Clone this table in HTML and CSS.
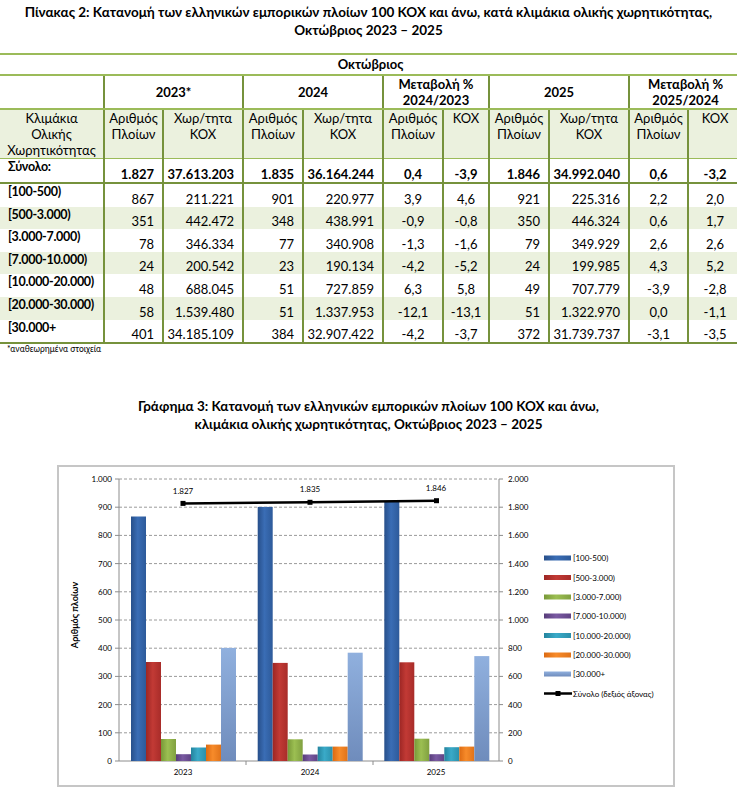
FILE: index.html
```
<!DOCTYPE html>
<html lang="el">
<head>
<meta charset="utf-8">
<title>Πίνακας 2</title>
<link rel="stylesheet" href="styles.css">
</head>
<body>
<h1 class="title">Πίνακας 2: Κατανομή των ελληνικών εμπορικών πλοίων 100 ΚΟΧ και άνω, κατά κλιμάκια ολικής χωρητικότητας,<br>Οκτώβριος 2023 – 2025</h1>

<table class="stats">
  <colgroup>
    <col class="c-lbl"><col class="c-n"><col class="c-w"><col class="c-n2"><col class="c-w"><col class="c-n2"><col class="c-k"><col class="c-n2"><col class="c-w"><col class="c-n"><col class="c-k2">
  </colgroup>
  <tr class="month"><th colspan="11">Οκτώβριος</th></tr>
  <tr class="years">
    <th class="first"></th>
    <th colspan="2">2023*</th>
    <th colspan="2">2024</th>
    <th colspan="2">Μεταβολή %<br>2024/2023</th>
    <th colspan="2">2025</th>
    <th colspan="2">Μεταβολή %<br>2025/2024</th>
  </tr>
  <tr class="sub">
    <th class="first">Κλιμάκια<br>Ολικής<br>Χωρητικότητας</th>
    <th>Αριθμός<br>Πλοίων</th><th>Χωρ/τητα<br>ΚΟΧ</th>
    <th>Αριθμός<br>Πλοίων</th><th>Χωρ/τητα<br>ΚΟΧ</th>
    <th>Αριθμός<br>Πλοίων</th><th>ΚΟΧ</th>
    <th>Αριθμός<br>Πλοίων</th><th>Χωρ/τητα<br>ΚΟΧ</th>
    <th>Αριθμός<br>Πλοίων</th><th>ΚΟΧ</th>
  </tr>
  <tr class="total">
    <td class="lbl">Σύνολο:</td>
    <td class="num">1.827</td><td class="num">37.613.203</td>
    <td class="num">1.835</td><td class="num">36.164.244</td>
    <td class="chg">0,4</td><td class="chg">-3,9</td>
    <td class="num">1.846</td><td class="num">34.992.040</td>
    <td class="chg">0,6</td><td class="chg">-3,2</td>
  </tr>
  <tr class="row">
    <td class="lbl">[100-500)</td>
    <td class="num">867</td><td class="num">211.221</td>
    <td class="num">901</td><td class="num">220.977</td>
    <td class="chg">3,9</td><td class="chg">4,6</td>
    <td class="num">921</td><td class="num">225.316</td>
    <td class="chg">2,2</td><td class="chg">2,0</td>
  </tr>
  <tr class="row alt">
    <td class="lbl">[500-3.000)</td>
    <td class="num">351</td><td class="num">442.472</td>
    <td class="num">348</td><td class="num">438.991</td>
    <td class="chg">-0,9</td><td class="chg">-0,8</td>
    <td class="num">350</td><td class="num">446.324</td>
    <td class="chg">0,6</td><td class="chg">1,7</td>
  </tr>
  <tr class="row">
    <td class="lbl">[3.000-7.000)</td>
    <td class="num">78</td><td class="num">346.334</td>
    <td class="num">77</td><td class="num">340.908</td>
    <td class="chg">-1,3</td><td class="chg">-1,6</td>
    <td class="num">79</td><td class="num">349.929</td>
    <td class="chg">2,6</td><td class="chg">2,6</td>
  </tr>
  <tr class="row alt">
    <td class="lbl">[7.000-10.000)</td>
    <td class="num">24</td><td class="num">200.542</td>
    <td class="num">23</td><td class="num">190.134</td>
    <td class="chg">-4,2</td><td class="chg">-5,2</td>
    <td class="num">24</td><td class="num">199.985</td>
    <td class="chg">4,3</td><td class="chg">5,2</td>
  </tr>
  <tr class="row">
    <td class="lbl">[10.000-20.000)</td>
    <td class="num">48</td><td class="num">688.045</td>
    <td class="num">51</td><td class="num">727.859</td>
    <td class="chg">6,3</td><td class="chg">5,8</td>
    <td class="num">49</td><td class="num">707.779</td>
    <td class="chg">-3,9</td><td class="chg">-2,8</td>
  </tr>
  <tr class="row alt">
    <td class="lbl">[20.000-30.000)</td>
    <td class="num">58</td><td class="num">1.539.480</td>
    <td class="num">51</td><td class="num">1.337.953</td>
    <td class="chg">-12,1</td><td class="chg">-13,1</td>
    <td class="num">51</td><td class="num">1.322.970</td>
    <td class="chg">0,0</td><td class="chg">-1,1</td>
  </tr>
  <tr class="row last">
    <td class="lbl">[30.000+</td>
    <td class="num">401</td><td class="num">34.185.109</td>
    <td class="num">384</td><td class="num">32.907.422</td>
    <td class="chg">-4,2</td><td class="chg">-3,7</td>
    <td class="num">372</td><td class="num">31.739.737</td>
    <td class="chg">-3,1</td><td class="chg">-3,5</td>
  </tr>
</table>
<p class="note">*αναθεωρημένα στοιχεία</p>

<h2 class="chart-title">Γράφημα 3: Κατανομή των ελληνικών εμπορικών πλοίων 100 ΚΟΧ και άνω,<br>κλιμάκια ολικής χωρητικότητας, Οκτώβριος 2023 – 2025</h2>

<div class="chart">
<svg class="chart-svg" width="614" height="318" viewBox="0 0 614 318" xmlns="http://www.w3.org/2000/svg">
  <defs>
    <linearGradient id="gBlue" x1="0" x2="1" y1="0" y2="0"><stop offset="0" stop-color="#274f8a"/><stop offset="0.45" stop-color="#3a6db5"/><stop offset="1" stop-color="#2d5a9a"/></linearGradient>
    <linearGradient id="gRed" x1="0" x2="1" y1="0" y2="0"><stop offset="0" stop-color="#9c2624"/><stop offset="0.45" stop-color="#c23a35"/><stop offset="1" stop-color="#a82c29"/></linearGradient>
    <linearGradient id="gGreen" x1="0" x2="1" y1="0" y2="0"><stop offset="0" stop-color="#789838"/><stop offset="0.45" stop-color="#9cbf52"/><stop offset="1" stop-color="#80a040"/></linearGradient>
    <linearGradient id="gPurple" x1="0" x2="1" y1="0" y2="0"><stop offset="0" stop-color="#573c7a"/><stop offset="0.45" stop-color="#7a5aa2"/><stop offset="1" stop-color="#604385"/></linearGradient>
    <linearGradient id="gCyan" x1="0" x2="1" y1="0" y2="0"><stop offset="0" stop-color="#24849e"/><stop offset="0.45" stop-color="#3aaac8"/><stop offset="1" stop-color="#2b90ab"/></linearGradient>
    <linearGradient id="gOrange" x1="0" x2="1" y1="0" y2="0"><stop offset="0" stop-color="#dc6a12"/><stop offset="0.45" stop-color="#f78b2a"/><stop offset="1" stop-color="#e0731a"/></linearGradient>
    <linearGradient id="gLight" x1="0" x2="0" y1="0" y2="1"><stop offset="0" stop-color="#90b0de"/><stop offset="1" stop-color="#6f8cbc"/></linearGradient>
  </defs>
  <g transform="translate(-59,-467)">
    <g class="grid">
      <line x1="119" x2="499" y1="479" y2="479"/>
      <line x1="119" x2="499" y1="507.2" y2="507.2"/>
      <line x1="119" x2="499" y1="535.4" y2="535.4"/>
      <line x1="119" x2="499" y1="563.6" y2="563.6"/>
      <line x1="119" x2="499" y1="591.8" y2="591.8"/>
      <line x1="119" x2="499" y1="620" y2="620"/>
      <line x1="119" x2="499" y1="648.2" y2="648.2"/>
      <line x1="119" x2="499" y1="676.4" y2="676.4"/>
      <line x1="119" x2="499" y1="704.6" y2="704.6"/>
      <line x1="119" x2="499" y1="732.8" y2="732.8"/>
    </g>
    <g class="axis">
      <line x1="119" x2="119" y1="479" y2="761"/>
      <line x1="499" x2="499" y1="479" y2="761"/>
      <line x1="115" x2="503" y1="761" y2="761"/>
      <line x1="115" x2="119" y1="479" y2="479"/><line x1="115" x2="119" y1="507.2" y2="507.2"/><line x1="115" x2="119" y1="535.4" y2="535.4"/><line x1="115" x2="119" y1="563.6" y2="563.6"/><line x1="115" x2="119" y1="591.8" y2="591.8"/><line x1="115" x2="119" y1="620" y2="620"/><line x1="115" x2="119" y1="648.2" y2="648.2"/><line x1="115" x2="119" y1="676.4" y2="676.4"/><line x1="115" x2="119" y1="704.6" y2="704.6"/><line x1="115" x2="119" y1="732.8" y2="732.8"/>
      <line x1="499" x2="503" y1="479" y2="479"/><line x1="499" x2="503" y1="507.2" y2="507.2"/><line x1="499" x2="503" y1="535.4" y2="535.4"/><line x1="499" x2="503" y1="563.6" y2="563.6"/><line x1="499" x2="503" y1="591.8" y2="591.8"/><line x1="499" x2="503" y1="620" y2="620"/><line x1="499" x2="503" y1="648.2" y2="648.2"/><line x1="499" x2="503" y1="676.4" y2="676.4"/><line x1="499" x2="503" y1="704.6" y2="704.6"/><line x1="499" x2="503" y1="732.8" y2="732.8"/>
      <line x1="246" x2="246" y1="761" y2="765"/><line x1="373" x2="373" y1="761" y2="765"/>
    </g>
    <g class="ylab">
      <text x="112" y="482">1.000</text><text x="112" y="510.2">900</text><text x="112" y="538.4">800</text><text x="112" y="566.6">700</text><text x="112" y="594.8">600</text><text x="112" y="623">500</text><text x="112" y="651.2">400</text><text x="112" y="679.4">300</text><text x="112" y="707.6">200</text><text x="112" y="735.8">100</text><text x="112" y="764">0</text>
    </g>
    <g class="rlab">
      <text x="508" y="482">2.000</text><text x="508" y="510.2">1.800</text><text x="508" y="538.4">1.600</text><text x="508" y="566.6">1.400</text><text x="508" y="594.8">1.200</text><text x="508" y="623">1.000</text><text x="508" y="651.2">800</text><text x="508" y="679.4">600</text><text x="508" y="707.6">400</text><text x="508" y="735.8">200</text><text x="508" y="764">0</text>
    </g>
    <text class="ytitle" transform="translate(78,615) rotate(-90)">Αριθμός πλοίων</text>
    <g class="bars">
      <rect x="131" y="516.5" width="15" height="244.5" fill="url(#gBlue)"/>
      <rect x="146" y="662" width="15" height="99" fill="url(#gRed)"/>
      <rect x="161" y="739" width="15" height="22" fill="url(#gGreen)"/>
      <rect x="176" y="754.2" width="15" height="6.8" fill="url(#gPurple)"/>
      <rect x="191" y="747.5" width="15" height="13.5" fill="url(#gCyan)"/>
      <rect x="206" y="744.6" width="15" height="16.4" fill="url(#gOrange)"/>
      <rect x="221" y="647.9" width="15" height="113.1" fill="url(#gLight)"/>

      <rect x="257.7" y="506.9" width="15" height="254.1" fill="url(#gBlue)"/>
      <rect x="272.7" y="662.9" width="15" height="98.1" fill="url(#gRed)"/>
      <rect x="287.7" y="739.3" width="15" height="21.7" fill="url(#gGreen)"/>
      <rect x="302.7" y="754.5" width="15" height="6.5" fill="url(#gPurple)"/>
      <rect x="317.7" y="746.6" width="15" height="14.4" fill="url(#gCyan)"/>
      <rect x="332.7" y="746.6" width="15" height="14.4" fill="url(#gOrange)"/>
      <rect x="347.7" y="652.7" width="15" height="108.3" fill="url(#gLight)"/>

      <rect x="384.3" y="501.3" width="15" height="259.7" fill="url(#gBlue)"/>
      <rect x="399.3" y="662.3" width="15" height="98.7" fill="url(#gRed)"/>
      <rect x="414.3" y="738.7" width="15" height="22.3" fill="url(#gGreen)"/>
      <rect x="429.3" y="754.2" width="15" height="6.8" fill="url(#gPurple)"/>
      <rect x="444.3" y="747.2" width="15" height="13.8" fill="url(#gCyan)"/>
      <rect x="459.3" y="746.6" width="15" height="14.4" fill="url(#gOrange)"/>
      <rect x="474.3" y="656.1" width="15" height="104.9" fill="url(#gLight)"/>
    </g>
    <polyline class="total-line" points="183,503.4 310,502.3 436.5,500.7"/>
    <rect x="180.5" y="500.9" width="5" height="5"/>
    <rect x="307.5" y="499.8" width="5" height="5"/>
    <rect x="434" y="498.2" width="5" height="5"/>
    <g class="vlab">
      <text x="183" y="494">1.827</text>
      <text x="310" y="492">1.835</text>
      <text x="436" y="491">1.846</text>
    </g>
    <g class="xlab">
      <text x="183" y="775">2023</text>
      <text x="310" y="775">2024</text>
      <text x="436" y="775">2025</text>
    </g>
    <g class="legend">
      <rect x="544" y="555.5" width="27" height="5" fill="url(#gBlue)"/><text x="573" y="561">[100-500)</text>
      <rect x="544" y="575" width="27" height="5" fill="url(#gRed)"/><text x="573" y="580.5">[500-3.000)</text>
      <rect x="544" y="594.5" width="27" height="5" fill="url(#gGreen)"/><text x="573" y="600">[3.000-7.000)</text>
      <rect x="544" y="613.5" width="27" height="5" fill="url(#gPurple)"/><text x="573" y="619">[7.000-10.000)</text>
      <rect x="544" y="633" width="27" height="5" fill="url(#gCyan)"/><text x="573" y="638.5">[10.000-20.000)</text>
      <rect x="544" y="652.5" width="27" height="5" fill="url(#gOrange)"/><text x="573" y="658">[20.000-30.000)</text>
      <rect x="544" y="671.5" width="27" height="5" fill="url(#gLight)"/><text x="573" y="677">[30.000+</text>
      <line class="total-line" x1="544" x2="572" y1="693.5" y2="693.5"/>
      <rect x="555.5" y="691" width="5" height="5"/>
      <text x="573" y="696.5">Σύνολο (δεξιός άξονας)</text>
    </g>
  </g>
</svg>
</div>
</body>
</html>
```

FILE: styles.css
```
body {
  margin: 0;
  width: 737px;
  font-family: Lato, "Open Sans", "DejaVu Sans", sans-serif;
  color: #000;
  background: #fff;
}

.title {
  margin: 0;
  padding-top: 3px;
  text-align: center;
  font-weight: 700;
  font-size: 13.5px;
  line-height: 18px;
}

.stats {
  margin: 14px 0 0 0;
  width: 731px;
  border-collapse: collapse;
  table-layout: fixed;
  font-size: 13px;
  line-height: 15px;
}

.c-lbl { width: 104px; }
.c-n { width: 59px; }
.c-w { width: 80px; }
.c-n2 { width: 60px; }
.c-k { width: 46px; }
.c-k2 { width: 53px; }

.stats th,
.stats td {
  padding: 0;
}

.month th {
  height: 19px;
  border-top: 2px solid #9bbb59;
  border-bottom: 2px solid #9bbb59;
  font-weight: 700;
  text-align: center;
}

.years th {
  height: 31px;
  font-weight: 700;
  text-align: center;
  vertical-align: middle;
  border-left: 2px solid #76923c;
  border-bottom: 2px solid #9bbb59;
  line-height: 16px;
}

.years th.first,
.sub th.first {
  border-left: none;
}

.sub th {
  height: 47px;
  background: #ebf1de;
  font-weight: 400;
  text-align: center;
  vertical-align: top;
  line-height: 16px;
  border-left: 2px solid #76923c;
  border-bottom: 1px solid #9bbb59;
}

.total td,
.row td {
  border-left: 2px solid #76923c;
}

.total td.lbl,
.row td.lbl {
  border-left: none;
}

.total td {
  height: 23px;
  font-weight: 700;
  border-bottom: 2px solid #76923c;
}

.row td {
  height: 22.6px;
}

.row.alt td {
  background: #ebf1de;
}

.row.last td {
  border-bottom: 2px solid #76923c;
}

.lbl {
  text-align: left;
  vertical-align: top;
  padding-left: 8px !important;
  font-weight: 700;
  font-size: 12.5px;
  letter-spacing: -0.3px;
  white-space: nowrap;
}

.num {
  text-align: right;
  vertical-align: bottom;
  padding-right: 8px !important;
}

.chg {
  text-align: center;
  vertical-align: bottom;
}

.note {
  margin: 0;
  padding-left: 7px;
  font-size: 8.5px;
  line-height: 10px;
}

.chart-title {
  margin: 43px 0 0 0;
  text-align: center;
  font-weight: 700;
  font-size: 13.5px;
  line-height: 18px;
}

.chart {
  margin: 32px 0 0 57px;
  width: 614px;
  height: 318px;
  border: 2px solid #c6c6c6;
}

.chart-svg {
  display: block;
  font-family: Lato, "Open Sans", sans-serif;
}

.grid line {
  stroke: #9a9a9a;
  stroke-width: 1;
  stroke-dasharray: 3 2;
}

.axis line {
  stroke: #8c8c8c;
  stroke-width: 1;
}

.ylab text {
  font-size: 8px;
  text-anchor: end;
  fill: #000;
}

.rlab text,
.legend text {
  font-size: 8px;
  text-anchor: start;
  fill: #000;
}

.vlab text,
.xlab text {
  font-size: 8px;
  text-anchor: middle;
  fill: #000;
}

.ytitle {
  font-size: 9px;
  font-weight: 700;
  text-anchor: middle;
}

.total-line {
  fill: none;
  stroke: #000;
  stroke-width: 2.5;
}
```
